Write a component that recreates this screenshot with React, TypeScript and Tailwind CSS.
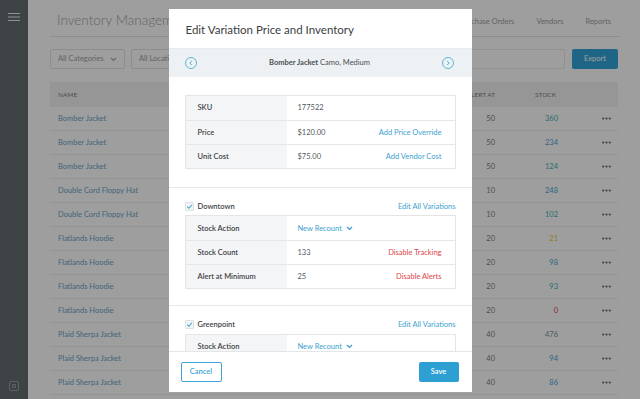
import { ReactNode } from "react";

const items = [
  { name: "Bomber Jacket", alert: 50, stock: "360", color: "text-[#3fb0b4]" },
  { name: "Bomber Jacket", alert: 50, stock: "234", color: "text-[#4aa3d6]" },
  { name: "Bomber Jacket", alert: 50, stock: "124", color: "text-[#3fb0b4]" },
  { name: "Double Cord Floppy Hat", alert: 10, stock: "248", color: "text-[#3fa8c8]" },
  { name: "Double Cord Floppy Hat", alert: 10, stock: "102", color: "text-[#3fb0b4]" },
  { name: "Flatlands Hoodie", alert: 20, stock: "21", color: "text-[#e2cc3a]" },
  { name: "Flatlands Hoodie", alert: 20, stock: "98", color: "text-[#4aa3d6]" },
  { name: "Flatlands Hoodie", alert: 20, stock: "93", color: "text-[#3fb0b4]" },
  { name: "Flatlands Hoodie", alert: 20, stock: "0", color: "text-[#e0454a]" },
  { name: "Plaid Sherpa Jacket", alert: 40, stock: "476", color: "text-[#7d8f9c]" },
  { name: "Plaid Sherpa Jacket", alert: 40, stock: "94", color: "text-[#4aa3d6]" },
  { name: "Plaid Sherpa Jacket", alert: 40, stock: "86", color: "text-[#4aa3d6]" },
];

const Chevron = ({ dir }: { dir: "left" | "right" }) => (
  <span className="flex h-[12px] w-[12px] items-center justify-center rounded-full border border-[#5bb8d6]">
    <svg width="6" height="6" viewBox="0 0 6 6" fill="none" stroke="#4fb0d2" strokeWidth="1">
      {dir === "left" ? <polyline points="3.8,1 1.8,3 3.8,5" /> : <polyline points="2.2,1 4.2,3 2.2,5" />}
    </svg>
  </span>
);

const Check = () => (
  <span className="flex h-[9px] w-[9px] items-center justify-center rounded-[1px] border border-[#dde1e4] bg-[#f2f4f5]">
    <svg width="7" height="7" viewBox="0 0 8 8" fill="none" stroke="#3aa6c8" strokeWidth="1.2">
      <polyline points="1.5,4.2 3.2,6 6.8,2" />
    </svg>
  </span>
);

const DownCaret = ({ color = "#3d9fd0" }: { color?: string }) => (
  <svg width="7" height="5" viewBox="0 0 7 5" fill="none" stroke={color} strokeWidth="1.2">
    <polyline points="1,1 3.5,3.5 6,1" />
  </svg>
);

const Dots = () => (
  <svg width="9" height="3" viewBox="0 0 9 3" fill="#54697a" className="mx-auto">
    <circle cx="1.2" cy="1.5" r="1.1" />
    <circle cx="4.5" cy="1.5" r="1.1" />
    <circle cx="7.8" cy="1.5" r="1.1" />
  </svg>
);

const Row = ({ label, value, action, first }: { label: string; value: ReactNode; action?: ReactNode; first?: boolean }) => (
  <div className={`flex h-[24px] ${first ? "" : "border-t border-[#e4e6e8]"}`}>
    <div className="flex w-[101px] items-center bg-[#f4f5f6] pl-[12px] font-semibold text-[#3d4144]">{label}</div>
    <div className="flex flex-1 items-center justify-between pl-[11px] pr-[13px] text-[#555a5e]">
      <span>{value}</span>
      {action}
    </div>
  </div>
);

const Location = ({ name }: { name: string }) => (
  <div className="flex items-center justify-between">
    <div className="flex items-center gap-[4px]">
      <Check />
      <span className="font-semibold text-[#3d4144]">{name}</span>
    </div>
    <span className="text-[#3d9fd0]">Edit All Variations</span>
  </div>
);

const NewRecount = () => (
  <span className="flex items-center gap-[4px] text-[#3d9fd0]">
    New Recount <DownCaret />
  </span>
);

export default function App() {
  return (
    <div className="relative h-[399px] w-[640px] overflow-hidden bg-white font-['Lato','Liberation_Sans',sans-serif]">
      {/* page behind the modal */}
      <div className="flex h-full">
        <aside className="flex w-[28px] flex-col items-center justify-between bg-[#656d72] pb-[8px] pt-[13px]">
          <svg width="12" height="8" viewBox="0 0 12 8" stroke="#e8eef2" strokeWidth="1">
            <line x1="0" y1="0.5" x2="12" y2="0.5" />
            <line x1="0" y1="4" x2="12" y2="4" />
            <line x1="0" y1="7.5" x2="12" y2="7.5" />
          </svg>
          <svg width="10" height="10" viewBox="0 0 10 10" fill="none" stroke="#949ca1" strokeWidth="1">
            <rect x="0.5" y="0.5" width="9" height="9" rx="1.5" />
            <rect x="3.5" y="3.5" width="3" height="3" />
          </svg>
        </aside>

        <main className="flex-1 pl-[22px] pr-[20px]">
          <div className="flex h-[37px] items-center justify-between border-b border-[#e6e6e6] pt-[4px]">
            <h1 className="pl-[7px] text-[13.5px] font-light text-[#9ea2a5]">Inventory Management</h1>
            <nav className="flex gap-[22px] pr-[9px] pt-[3px] text-[7.5px] text-[#a0a0a0]">
              <span>Items</span>
              <span>Purchase Orders</span>
              <span>Vendors</span>
              <span>Reports</span>
            </nav>
          </div>

          <div className="mt-[12px] flex h-[20px] gap-[6px] text-[7.5px] text-[#a2a2a2]">
            <div className="flex w-[75px] items-center justify-between rounded-[2px] border border-[#e4e4e4] px-[7px]">
              <span>All Categories</span>
              <DownCaret color="#a8a8a8" />
            </div>
            <div className="flex w-[75px] items-center justify-between rounded-[2px] border border-[#e4e4e4] px-[7px]">
              <span>All Locations</span>
              <DownCaret color="#a8a8a8" />
            </div>
            <div className="flex-1 rounded-[2px] border border-[#e8e8e8]" />
            <button className="ml-[1px] mr-[2px] w-[46px] rounded-[2px] bg-[#32a5d8] text-white">Export</button>
          </div>

          <div className="mt-[13px] text-[7.5px]">
            <div className="mr-[2px] flex h-[25px] items-center bg-[#f3f3f3] text-[6.5px] text-[#7c7c7c]">
              <span className="flex-1 pl-[8px]">NAME</span>
              <span className="w-[60px] text-right">ALERT AT</span>
              <span className="ml-[20px] w-[43px] pl-[20px]">STOCK</span>
              <span className="ml-[36px] w-[24px]" />
            </div>
            {items.map((item, i) => (
              <div key={i} className="mr-[2px] flex h-[24px] items-center border-b border-[#eeeeee]">
                <span className="flex-1 pl-[8px] text-[#6aa3c6]">{item.name}</span>
                <span className="w-[60px] text-right text-[#808080]">{item.alert}</span>
                <span className={`ml-[20px] w-[43px] text-right ${item.color}`}>{item.stock}</span>
                <span className="ml-[36px] flex w-[24px] justify-center">
                  <Dots />
                </span>
              </div>
            ))}
          </div>
        </main>
      </div>

      {/* dim overlay */}
      <div className="absolute inset-0 bg-black/[0.38]" />

      {/* modal */}
      <div className="absolute inset-0 flex items-center justify-center pt-[2px]">
        <div className="flex h-[383px] w-[303px] flex-col bg-white text-[7.5px]">
          <div className="flex h-[39px] items-center pl-[17px] pt-[2px]">
            <h2 className="text-[11.5px] text-[#3a3d40]">Edit Variation Price and Inventory</h2>
          </div>

          <div className="flex h-[29px] items-center justify-between border-t border-[#e9ecee] bg-[#eef1f3] pl-[16px] pr-[17px]">
            <Chevron dir="left" />
            <span className="text-[#4a4e52]">
              <span className="font-bold">Bomber Jacket</span> Camo, Medium
            </span>
            <Chevron dir="right" />
          </div>

          <div className="flex-1 overflow-hidden">
            <div className="border-b border-[#e6e8ea] px-[16px] pb-[18px] pt-[18px]">
              <div className="border border-[#e3e5e7]">
                <Row first label="SKU" value="177522" />
                <Row label="Price" value="$120.00" action={<span className="text-[#3d9fd0]">Add Price Override</span>} />
                <Row label="Unit Cost" value="$75.00" action={<span className="text-[#3d9fd0]">Add Vendor Cost</span>} />
              </div>
            </div>

            <div className="border-b border-[#e6e8ea] px-[16px] pb-[16px] pt-[13px]">
              <Location name="Downtown" />
              <div className="mt-[3px] border border-[#e3e5e7]">
                <Row first label="Stock Action" value={<NewRecount />} />
                <Row label="Stock Count" value="133" action={<span className="text-[#e0454a]">Disable Tracking</span>} />
                <Row label="Alert at Minimum" value="25" action={<span className="text-[#e0454a]">Disable Alerts</span>} />
              </div>
            </div>

            <div className="px-[16px] pt-[13px]">
              <Location name="Greenpoint" />
              <div className="mt-[3px] border border-[#e3e5e7]">
                <Row first label="Stock Action" value={<NewRecount />} />
              </div>
            </div>
          </div>

          <div className="flex h-[41px] items-center justify-between border-t border-[#e3e5e7] pl-[12px] pr-[13px]">
            <button className="h-[20px] w-[41px] rounded-[2px] border border-[#3fa5d4] font-semibold text-[#3fa5d4]">Cancel</button>
            <button className="h-[20px] w-[40px] rounded-[2px] bg-[#2d9fd3] font-semibold text-white">Save</button>
          </div>
        </div>
      </div>
    </div>
  );
}
